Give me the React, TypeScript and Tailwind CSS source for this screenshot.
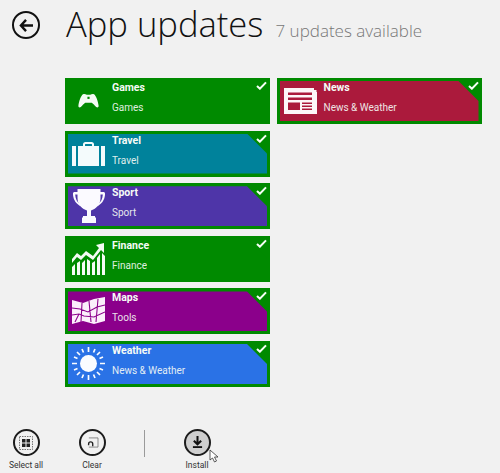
const green = '#008a00'

function Gamepad() {
  return (
    <svg viewBox="0 0 24 20" className="w-[23px] h-[18px]" fill="#f4fbf4">
      <path d="M6 2.500c1.600-.7 3 .3 4 .6h4c1-.3 2.400-1.300 4-.6 2.400 1 4.600 8.500 5.200 12.500.3 2-1.200 2.800-2.600 1.800-1.800-1.300-3-3.700-5-4.800H8.400c-2 1.100-3.200 3.500-5 4.800C2 17.800.5 17 .8 15 1.400 11 3.600 3.500 6 2.500z" />
      <rect x="10.800" y="5.300" width="2.400" height="2.400" fill={green} />
    </svg>
  )
}

function Suitcase() {
  return (
    <svg viewBox="0 0 33 24" className="w-[33px] h-[24px]" fill="#f4fbfc">
      <rect x="0" y="4" width="4" height="20" />
      <rect x="29" y="4" width="4" height="20" />
      <path d="M6 4h5V2.500A2.500 2.500 0 0 1 13.500 0h6A2.500 2.500 0 0 1 22 2.500V4h5v20H6zM13 4h7V2.500a.5.5 0 0 0-.5-.5h-6a.5.5 0 0 0-.5.5z" fillRule="evenodd" />
    </svg>
  )
}

function Trophy() {
  return (
    <svg viewBox="0 0 32 34" className="w-[32px] h-[34px]" fill="#fbfaff">
      <path d="M4.500 0h23v9c0 7-5 11-9.500 12.500V27h-4v-5.500C9.500 20 4.500 16 4.500 9z" />
      <path d="M10 27h12v1.500h1V34H9v-5.500h1z" />
      <path d="M5 3H1.500C.3 3-.2 4 0 6c.5 5 3.400 9.500 8.500 11.500L7 15C4 13 2.400 10 2.200 5.500H5zM27 3h3.500c1.200 0 1.700 1 1.500 3-.5 5-3.400 9.500-8.500 11.500L25 15c3-2 4.600-5 4.800-9.500H27z" />
    </svg>
  )
}

function Chart() {
  return (
    <svg viewBox="0 0 33 32" className="w-[33px] h-[32px]" fill="#f4fbf4">
      <path d="M32 0v10l-3-3-8 10-7-5-5 5-4-3-5 6v-4l5-6 4 3 5-5 7 5 6-8-3-3z" />
      <path d="M0 24l3-3v11H0zM5 20l3-2v14H5zM10 20l3-3v15h-3zM15 16l3 2v14h-3zM20 20l3-2v14h-3zM25 15l3-4v21h-3zM30 10l3 3v19h-3z" />
    </svg>
  )
}

function MapIcon() {
  return (
    <svg viewBox="0 0 33 28" className="w-[33px] h-[28px]" fill="#fbeffb">
      <path d="M0 3l11 3 11-4 11-2v24l-11 3-11-3-11 3z" />
      <path d="M0 11l8 1 8 3 9-5 8-2M0 18l7-1 5 2 10 1 11-5M10 6l-1 19M17 4l2 21M26 2l-2 23M7 17l-4 8" stroke="#8b008b" strokeWidth="1.100" fill="none" />
    </svg>
  )
}

function Sun() {
  return (
    <svg viewBox="0 0 33 33" className="w-[33px] h-[33px]" fill="#fafcff" stroke="#fafcff">
      <circle cx="16.500" cy="16.500" r="8.500" stroke="none" />
      <g strokeWidth="1.700">
        <path d="M16.500 0v5M16.500 28v5M0 16.500h5M28 16.500h5M5 5l3 3M25 25l3 3M28 5l-3 3M8 25l-3 3" />
        <path d="M10 2l1.500 3.500M23 2l-1.500 3.500M10 31l1.500-3.500M23 31l-1.500-3.500M2 10l3.500 1.500M2 23l3.500-1.500M31 10l-3.500 1.500M31 23l-3.500-1.500" />
      </g>
    </svg>
  )
}

function Paper() {
  return (
    <svg viewBox="0 0 33 26" className="w-[33px] h-[26px]">
      <path d="M0 0h30v2h2.500v2H33v22H0z" fill="#fdf6f8" />
      <g fill="#ab1a3c">
        <rect x="4" y="4.500" width="24" height="2.500" />
        <rect x="4" y="9.500" width="24" height="2.500" />
        <path d="M4 14.500h12v7.500H4z" />
        <rect x="18" y="14.500" width="10" height="1.500" />
        <rect x="18" y="17.500" width="10" height="1.500" />
        <rect x="18" y="20.500" width="10" height="1.500" />
      </g>
    </svg>
  )
}

function Check() {
  return (
    <svg viewBox="0 0 12 10" className="absolute top-[3px] right-[3px] w-[11px] h-[9px]">
      <path d="M1 5.500l3.200 3L11 1.500" fill="none" stroke="#f6fff6" strokeWidth="2.300" />
    </svg>
  )
}

type Tile = { title: string; sub: string; bg: string; icon: React.ReactNode }

const leftTiles: Tile[] = [
  { title: 'Games', sub: 'Games', bg: 'bg-[#008a00]', icon: <Gamepad /> },
  { title: 'Travel', sub: 'Travel', bg: 'bg-[#00829b]', icon: <Suitcase /> },
  { title: 'Sport', sub: 'Sport', bg: 'bg-[#4e35a8]', icon: <Trophy /> },
  { title: 'Finance', sub: 'Finance', bg: 'bg-[#008a00]', icon: <Chart /> },
  { title: 'Maps', sub: 'Tools', bg: 'bg-[#8b008b]', icon: <MapIcon /> },
  { title: 'Weather', sub: 'News & Weather', bg: 'bg-[#2a72e6]', icon: <Sun /> },
]

const news: Tile = { title: 'News', sub: 'News & Weather', bg: 'bg-[#ab1a3c]', icon: <Paper /> }

function AppTile({ tile }: { tile: Tile }) {
  return (
    <div className="relative w-[205px] h-[46px] bg-[#008a00] p-[3px] text-[#f6fbf6]">
      <div className={`flex h-full ${tile.bg} [clip-path:polygon(0_0,calc(100%-20px)_0,100%_20px,100%_100%,0_100%)]`}>
        <div className="flex w-[44px] shrink-0 items-center justify-center pr-[3px]">{tile.icon}</div>
        <div className="flex flex-col font-['Roboto',sans-serif]">
          <span className="text-[10.500px] leading-[13px] font-bold">{tile.title}</span>
          <span className="mt-[7px] text-[10px] leading-[13px] opacity-90">{tile.sub}</span>
        </div>
      </div>
      <Check />
    </div>
  )
}

function BarButton({ label, active, children }: { label: string; active?: boolean; children: React.ReactNode }) {
  return (
    <div className="flex w-[52px] flex-col items-center gap-[3px]">
      <div className={`flex h-[27px] w-[27px] items-center justify-center rounded-full border-2 border-[#1c1c1c] ${active ? 'bg-[#cfcfcf]' : ''}`}>
        {children}
      </div>
      <span className="font-['Roboto',sans-serif] text-[8.500px] leading-[12px] text-[#333]">{label}</span>
    </div>
  )
}

export default function App() {
  return (
    <main className="relative flex h-[473px] w-[500px] flex-col overflow-hidden bg-[#f1f1f1] font-['Open_Sans',sans-serif]">
      <header className="flex items-start pt-[11px] pl-[12px]">
        <div className="flex h-[28px] w-[28px] items-center justify-center rounded-full border-2 border-[#111]">
          <svg viewBox="0 0 16 14" className="w-[15px] h-[13px]">
            <path d="M7.500 1L2 7l5.500 6M2.500 7H15" fill="none" stroke="#111" strokeWidth="2.600" />
          </svg>
        </div>
        <h1 className="ml-[26px] -mt-[12px] text-[34.600px] leading-[50px] font-light text-[#111]">App updates</h1>
        <p className="ml-[12px] mt-[8px] text-[17px] leading-[24px] font-light text-[#777]">7 updates available</p>
      </header>

      <section className="mt-[29px] ml-[65px] flex gap-[6.500px]">
        <div className="flex flex-col gap-[6.600px]">
          {leftTiles.map((t) => (
            <AppTile key={t.title} tile={t} />
          ))}
        </div>
        <div>
          <AppTile tile={news} />
        </div>
      </section>

      <footer className="mt-auto flex items-start pb-[2px]">
        <BarButton label="Select all">
          <svg viewBox="0 0 14 14" className="w-[14px] h-[14px]">
            <rect x="0.500" y="0.500" width="13" height="13" fill="none" stroke="#555" strokeWidth="0.800" strokeDasharray="1.500 1" />
            <path d="M3 3h3.500v3.500H3zM7.500 3H11v3.500H7.500zM3 7.500h3.500V11H3zM7.500 7.500H11V11H7.500z" fill="#222" />
          </svg>
        </BarButton>
        <div className="ml-[14px]">
          <BarButton label="Clear">
            <svg viewBox="0 0 14 12" className="w-[13px] h-[11px]">
              <path d="M3 1h10v10H3" fill="none" stroke="#666" strokeWidth="0.800" />
              <path d="M2 7.500a3 3 0 0 1 6 0v2.500H6.500V7.500a1.500 1.500 0 0 0-3 0V9H2z" fill="#222" />
            </svg>
          </BarButton>
        </div>
        <div className="ml-[26px] mt-[1px] h-[27px] w-px bg-[#9a9a9a]" />
        <div className="ml-[26px]">
          <BarButton label="Install" active>
            <svg viewBox="0 0 12 14" className="w-[11px] h-[13px]">
              <path d="M6 0v8M2 5l4 4 4-4" fill="none" stroke="#111" strokeWidth="2.200" />
              <rect x="1" y="11" width="10" height="2" fill="#111" />
            </svg>
          </BarButton>
        </div>
      </footer>

      <svg viewBox="0 0 10 14" className="absolute left-[209px] top-[449px] w-[10px] h-[14px]">
        <path d="M1 1v10l2.500-2 2 4 2-1-2-4H9z" fill="#fff" stroke="#333" strokeWidth="0.800" />
      </svg>
    </main>
  )
}
